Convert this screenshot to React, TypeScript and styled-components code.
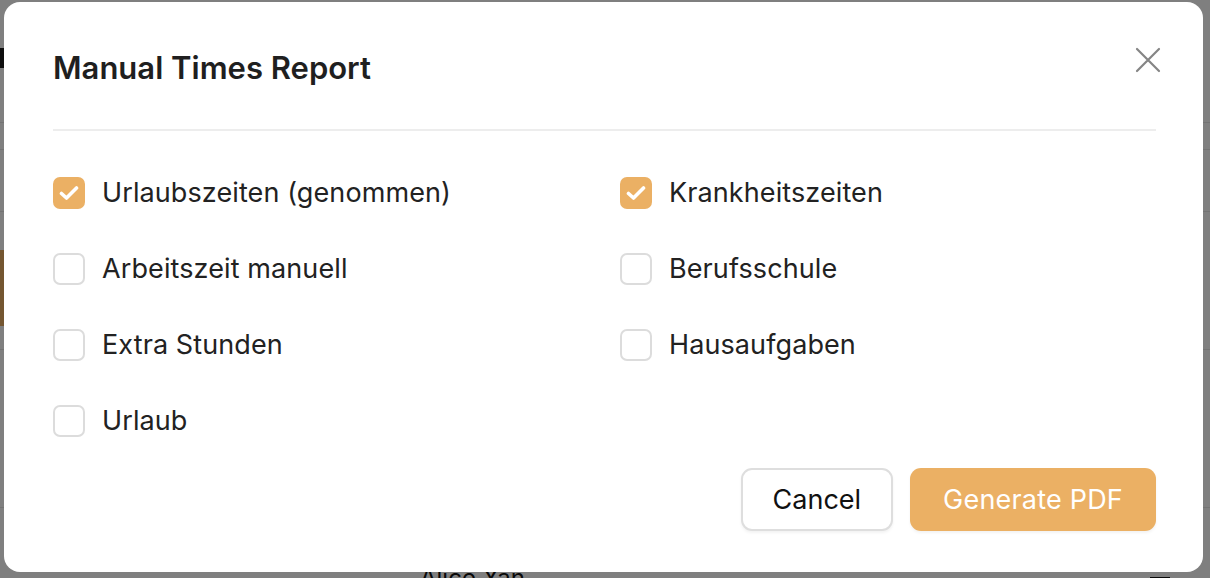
import React, { useState } from "react";
import styled, { createGlobalStyle } from "styled-components";

const GlobalStyle = createGlobalStyle`
  html, body { margin: 0; padding: 0; }
  body {
    width: 1210px;
    height: 578px;
    overflow: hidden;
    font-family: Inter, "Noto Sans", "Liberation Sans", sans-serif;
    background: #ffffff;
  }
`;

/* ---------- underlying page (mostly hidden behind the dialog) ---------- */
const Page = styled.div`
  width: 1210px;
  height: 578px;
  display: flex;
  flex-direction: column;
  background: #fff;
`;

const PageBand = styled.div<{ $h: number; $line?: boolean }>`
  height: ${(p) => p.$h}px;
  flex: none;
  box-sizing: border-box;
  border-bottom: ${(p) => (p.$line ? "1px solid #e6e6e6" : "none")};
  display: flex;
  align-items: center;
`;

const DarkBar = styled.div`
  width: 60px;
  height: 20px;
  background: #1c1c1c;
`;

const OrangeBlock = styled.div`
  width: 60px;
  height: 76px;
  background: #e9ad62;
`;

const BottomName = styled.div`
  margin-left: 420px;
  font-size: 24px;
  color: #111;
  line-height: 24px;
  padding-top: 4px;
  flex: 1;
`;

const SmallBox = styled.div`
  width: 16px;
  height: 16px;
  border: 2px solid #111;
  margin-right: 40px;
  align-self: flex-start;
  margin-top: 4px;
`;

/* ---------- overlay + dialog ---------- */
const Overlay = styled.div`
  position: fixed;
  inset: 0;
  background: rgba(0, 0, 0, 0.5);
`;

const Dialog = styled.div`
  position: fixed;
  left: 4px;
  top: 2px;
  width: 1199px;
  height: 570px;
  box-sizing: border-box;
  background: #fff;
  border-radius: 16px;
  padding: 49px 47px 41px 49px;
  display: flex;
  flex-direction: column;
`;

const Header = styled.div`
  display: flex;
  align-items: flex-start;
  justify-content: space-between;
  padding-bottom: 44px;
  border-bottom: 2px solid #ededed;
`;

const Title = styled.h2`
  margin: 0;
  font-size: 31px;
  line-height: 34px;
  font-weight: 600;
  color: #1f1f1f;
`;

const CloseButton = styled.button`
  width: 30px;
  height: 30px;
  margin-top: -6px;
  margin-right: -7px;
  padding: 0;
  border: none;
  background: transparent;
  display: flex;
  align-items: center;
  justify-content: center;
  cursor: pointer;
`;

const Options = styled.div`
  display: grid;
  grid-template-columns: 567px 1fr;
  row-gap: 44px;
  padding-top: 46px;
`;

const OptionRow = styled.label`
  display: flex;
  align-items: center;
  gap: 17px;
  height: 32px;
  cursor: pointer;
`;

const Box = styled.span<{ $checked: boolean }>`
  width: 32px;
  height: 32px;
  flex: none;
  box-sizing: border-box;
  border-radius: 7px;
  border: ${(p) => (p.$checked ? "none" : "2px solid #dcdcdc")};
  background: ${(p) => (p.$checked ? "#ebb064" : "#fff")};
  display: flex;
  align-items: center;
  justify-content: center;
`;

const OptionText = styled.span`
  font-size: 27px;
  line-height: 32px;
  color: #222;
  letter-spacing: 0.1px;
`;

const Footer = styled.div`
  margin-top: auto;
  display: flex;
  justify-content: flex-end;
  gap: 17px;
`;

const Button = styled.button<{ $primary?: boolean }>`
  height: 63px;
  box-sizing: border-box;
  padding: ${(p) => (p.$primary ? "0 33px" : "0 30px")};
  border-radius: 11px;
  font-family: inherit;
  font-size: 27px;
  font-weight: 400;
  letter-spacing: ${(p) => (p.$primary ? "0.2px" : "0")};
  cursor: pointer;
  border: ${(p) => (p.$primary ? "none" : "2px solid #dedede")};
  background: ${(p) => (p.$primary ? "#ebb064" : "#fff")};
  color: ${(p) => (p.$primary ? "#fff" : "#111")};
  box-shadow: 0 2px 3px rgba(0, 0, 0, 0.05);
`;

const CheckIcon = () => (
  <svg width="20" height="16" viewBox="0 0 20 16" fill="none">
    <path
      d="M2.5 8.5 L7.5 13 L17.5 3"
      stroke="#fff"
      strokeWidth="3.6"
      strokeLinecap="round"
      strokeLinejoin="round"
    />
  </svg>
);

const CloseIcon = () => (
  <svg width="26" height="26" viewBox="0 0 26 26" fill="none">
    <path d="M2 2 L24 24 M24 2 L2 24" stroke="#858585" strokeWidth="2.2" strokeLinecap="round" />
  </svg>
);

const initial = [
  { label: "Urlaubszeiten (genommen)", checked: true },
  { label: "Krankheitszeiten", checked: true },
  { label: "Arbeitszeit manuell", checked: false },
  { label: "Berufsschule", checked: false },
  { label: "Extra Stunden", checked: false },
  { label: "Hausaufgaben", checked: false },
  { label: "Urlaub", checked: false },
];

export default function App() {
  const [items, setItems] = useState(initial);
  const toggle = (i: number) =>
    setItems((prev) => prev.map((it, j) => (j === i ? { ...it, checked: !it.checked } : it)));

  return (
    <>
      <GlobalStyle />
      <Page>
        <PageBand $h={48} />
        <PageBand $h={20}>
          <DarkBar />
        </PageBand>
        <PageBand $h={55} $line />
        <PageBand $h={27} $line />
        <PageBand $h={62} $line />
        <PageBand $h={38} />
        <PageBand $h={76}>
          <OrangeBlock />
        </PageBand>
        <PageBand $h={24} $line />
        <PageBand $h={158} $line />
        <PageBand $h={65} />
        <PageBand $h={5}>
          <BottomName>Alice Yan</BottomName>
          <SmallBox />
        </PageBand>
      </Page>
      <Overlay />
      <Dialog role="dialog" aria-labelledby="dlg-title">
        <Header>
          <Title id="dlg-title">Manual Times Report</Title>
          <CloseButton aria-label="Close">
            <CloseIcon />
          </CloseButton>
        </Header>
        <Options>
          {items.map((it, i) => (
            <OptionRow key={it.label} onClick={() => toggle(i)}>
              <Box $checked={it.checked}>{it.checked && <CheckIcon />}</Box>
              <OptionText>{it.label}</OptionText>
            </OptionRow>
          ))}
        </Options>
        <Footer>
          <Button>Cancel</Button>
          <Button $primary>Generate PDF</Button>
        </Footer>
      </Dialog>
    </>
  );
}
